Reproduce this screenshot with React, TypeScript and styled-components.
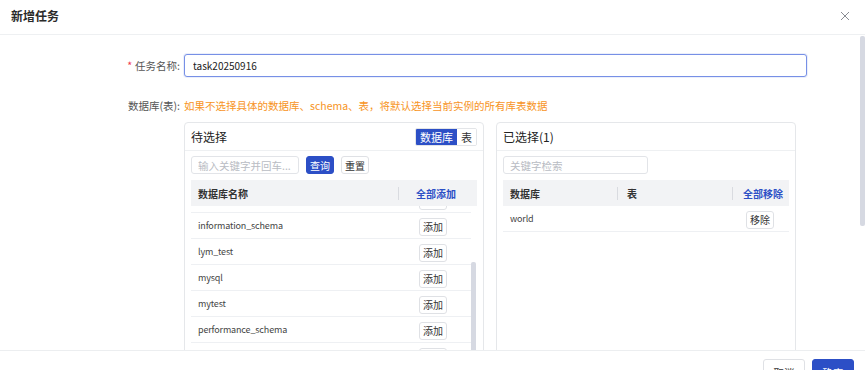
import React, { useLayoutEffect, useRef } from "react";
import styled, { createGlobalStyle } from "styled-components";

const BLUE = "#2c4fc6";

const Global = createGlobalStyle`
  html, body { margin: 0; padding: 0; background: #fff; overflow: hidden; }
  body { font-family: "Noto Sans CJK SC", "Noto Sans", sans-serif; color: #333; }
  * { box-sizing: border-box; }
`;

const Modal = styled.div`
  width: 865px;
  display: flex;
  flex-direction: column;
  background: #fff;
`;

const Header = styled.div`
  height: 35px;
  display: flex;
  align-items: center;
  justify-content: space-between;
  padding: 0 15px 3px 11px;
  border-bottom: 1px solid #eef0f2;
`;

const Title = styled.div`
  font-size: 12px;
  font-weight: 700;
  color: #2a2a2a;
`;

const Close = styled.button`
  border: 0;
  padding: 0;
  background: none;
  display: flex;
  cursor: pointer;
`;

const ScrollArea = styled.div`
  position: relative;
`;

const Thumb = styled.div<{ $top: number; $h: number; $right: number }>`
  position: absolute;
  right: ${(p) => p.$right}px;
  top: ${(p) => p.$top}px;
  width: 5px;
  height: ${(p) => p.$h}px;
  background: #d6d9e2;
  border-radius: 2px;
  pointer-events: none;
`;

const Body = styled.div`
  height: 315px;
  overflow-y: auto;
  padding: 19px 58px 24px 0;
  scrollbar-width: none;
  &::-webkit-scrollbar { display: none; }
`;

const FormRow = styled.div<{ $top?: number; $align?: string }>`
  display: flex;
  align-items: ${(p) => p.$align || "center"};
  margin-top: ${(p) => p.$top || 0}px;
`;

const Label = styled.div`
  width: 184px;
  flex-shrink: 0;
  padding-right: 4px;
  text-align: right;
  font-size: 10.5px;
  line-height: 16px;
  color: #555;
`;

const Star = styled.span`
  color: #f0394d;
  margin-right: 3px;
`;

const Control = styled.div`
  flex: 1;
  min-width: 0;
  display: flex;
  flex-direction: column;
`;

const TextInput = styled.input`
  width: 100%;
  height: 23px;
  border: 1px solid #7790e6;
  border-radius: 3px;
  padding: 0 8px;
  font-family: inherit;
  font-size: 10px;
  color: #222;
  outline: none;
  box-shadow: 0 0 0 1px rgba(90, 120, 220, 0.12);
`;

const Hint = styled.div`
  font-size: 10.5px;
  line-height: 16px;
  color: #f7941e;
`;

const Transfer = styled.div`
  display: flex;
  gap: 12px;
  margin-top: 8px;
`;

const Panel = styled.div`
  width: 300px;
  height: 350px;
  border: 1px solid #e5e7ea;
  border-radius: 4px;
  display: flex;
  flex-direction: column;
  overflow: hidden;
`;

const PanelHead = styled.div`
  height: 28px;
  flex-shrink: 0;
  padding: 0 6px;
  display: flex;
  align-items: center;
  justify-content: space-between;
  border-bottom: 1px solid #eef0f2;
  font-size: 12px;
  color: #222;
`;

const Toggle = styled.div`
  display: flex;
  height: 18px;
  border: 1px solid #e3e5e8;
  border-radius: 2px;
  overflow: hidden;
`;

const ToggleItem = styled.div<{ $active?: boolean }>`
  padding: 0 4px;
  display: flex;
  align-items: center;
  font-size: 11px;
  background: ${(p) => (p.$active ? BLUE : "#fff")};
  color: ${(p) => (p.$active ? "#fff" : "#333")};
`;

const Toolbar = styled.div`
  display: flex;
  align-items: center;
  gap: 7px;
  padding: 5px 6px 0;
  flex-shrink: 0;
`;

const Search = styled.input<{ $w: number }>`
  width: ${(p) => p.$w}px;
  height: 18px;
  border: 1px solid #e2e4e8;
  border-radius: 3px;
  padding: 0 6px;
  font-family: inherit;
  font-size: 10.5px;
  outline: none;
  &::placeholder { color: #b9bcc3; }
`;

const Btn = styled.button<{ $primary?: boolean; $w?: number; $h?: number }>`
  width: ${(p) => p.$w || 28}px;
  height: ${(p) => p.$h || 18}px;
  padding: 0;
  border-radius: 3px;
  font-family: inherit;
  font-size: 10px;
  cursor: pointer;
  border: 1px solid ${(p) => (p.$primary ? BLUE : "#dfe1e5")};
  background: ${(p) => (p.$primary ? BLUE : "#fff")};
  color: ${(p) => (p.$primary ? "#fff" : "#333")};
  flex-shrink: 0;
`;

const Table = styled.div`
  flex: 1;
  min-height: 0;
  margin: 6px 6px 0;
  display: flex;
  flex-direction: column;
`;

const THead = styled.div<{ $cols: string }>`
  height: 26px;
  flex-shrink: 0;
  display: grid;
  grid-template-columns: ${(p) => p.$cols};
  align-items: center;
  background: #f2f3f5;
  font-size: 10px;
  font-weight: 600;
  color: #333;
`;

const HeadCell = styled.div<{ $divider?: boolean; $pad: number; $link?: boolean }>`
  height: 13px;
  display: flex;
  align-items: center;
  padding-left: ${(p) => p.$pad}px;
  border-left: ${(p) => (p.$divider ? "1px solid #d9dbe0" : "0")};
  color: ${(p) => (p.$link ? BLUE : "#333")};
`;

const ListArea = styled(ScrollArea)`
  flex: 1;
  min-height: 0;
  display: flex;
  flex-direction: column;
`;

const List = styled.div<{ $gutter?: number }>`
  flex: 1;
  min-height: 0;
  overflow-y: auto;
  padding-right: ${(p) => p.$gutter || 0}px;
  scrollbar-width: none;
  &::-webkit-scrollbar { display: none; }
`;

const Row = styled.div<{ $cols: string }>`
  height: 26px;
  display: grid;
  grid-template-columns: ${(p) => p.$cols};
  align-items: center;
  border-bottom: 1px solid #eef0f3;
  font-size: 9px;
  letter-spacing: -0.15px;
  color: #444;
`;

const Cell = styled.div<{ $pad: number }>`
  padding-left: ${(p) => p.$pad}px;
  display: flex;
  align-items: center;
  white-space: nowrap;
`;

const RowBtn = styled(Btn)`
  letter-spacing: 0;
  margin-top: 2px;
`;

const Footer = styled.div`
  border-top: 1px solid #eceef0;
  padding: 8px 11px;
  display: flex;
  justify-content: flex-end;
  gap: 7px;
`;

const FooterBtn = styled(Btn)`
  font-size: 10.5px;
`;

const dbs = [
  "bank_db",
  "demo",
  "hive_meta",
  "information_schema",
  "lym_test",
  "mysql",
  "mytest",
  "performance_schema",
  "sys",
  "test",
  "test_db",
  "world",
  "zdb",
];

const LEFT_COLS = "207px 1fr";
const RIGHT_COLS = "114px 115px 1fr";

export default function App() {
  const listRef = useRef<HTMLDivElement>(null);
  useLayoutEffect(() => {
    if (listRef.current) listRef.current.scrollTop = 71;
  }, []);

  return (
    <>
      <Global />
      <Modal>
        <Header>
          <Title>新增任务</Title>
          <Close aria-label="关闭">
            <svg width="10" height="10" viewBox="0 0 10 10">
              <path d="M1 1L9 9M9 1L1 9" stroke="#8a8d93" strokeWidth="1" fill="none" />
            </svg>
          </Close>
        </Header>
        <ScrollArea>
          <Body>
            <FormRow>
              <Label>
                <Star>*</Star>任务名称:
              </Label>
              <Control>
                <TextInput defaultValue="task20250916" />
              </Control>
            </FormRow>
            <FormRow $top={21} $align="flex-start">
              <Label>数据库(表):</Label>
              <Control>
                <Hint>如果不选择具体的数据库、schema、表，将默认选择当前实例的所有库表数据</Hint>
                <Transfer>
                  <Panel>
                    <PanelHead>
                      <span>待选择</span>
                      <Toggle>
                        <ToggleItem $active>数据库</ToggleItem>
                        <ToggleItem>表</ToggleItem>
                      </Toggle>
                    </PanelHead>
                    <Toolbar>
                      <Search $w={108} placeholder="输入关键字并回车..." />
                      <Btn $primary>查询</Btn>
                      <Btn>重置</Btn>
                    </Toolbar>
                    <Table>
                      <THead $cols={LEFT_COLS}>
                        <HeadCell $pad={7}>数据库名称</HeadCell>
                        <HeadCell $pad={17} $divider $link>
                          全部添加
                        </HeadCell>
                      </THead>
                      <ListArea>
                        <List ref={listRef} $gutter={6}>
                          {dbs.map((d) => (
                            <Row key={d} $cols={LEFT_COLS}>
                              <Cell $pad={7}>{d}</Cell>
                              <Cell $pad={21}>
                                <RowBtn>添加</RowBtn>
                              </Cell>
                            </Row>
                          ))}
                        </List>
                        <Thumb $top={56} $h={209} $right={1} />
                      </ListArea>
                    </Table>
                  </Panel>
                  <Panel>
                    <PanelHead>
                      <span>已选择(1)</span>
                    </PanelHead>
                    <Toolbar>
                      <Search $w={145} placeholder="关键字检索" />
                    </Toolbar>
                    <Table>
                      <THead $cols={RIGHT_COLS}>
                        <HeadCell $pad={7}>数据库</HeadCell>
                        <HeadCell $pad={9} $divider>
                          表
                        </HeadCell>
                        <HeadCell $pad={10} $divider $link>
                          全部移除
                        </HeadCell>
                      </THead>
                      <ListArea>
                        <List>
                          <Row $cols={RIGHT_COLS}>
                            <Cell $pad={7}>world</Cell>
                            <Cell $pad={9}></Cell>
                            <Cell $pad={14}>
                              <RowBtn>移除</RowBtn>
                            </Cell>
                          </Row>
                        </List>
                      </ListArea>
                    </Table>
                  </Panel>
                </Transfer>
              </Control>
            </FormRow>
          </Body>
          <Thumb $top={1} $h={190} $right={0} />
        </ScrollArea>
        <Footer>
          <FooterBtn $w={42} $h={26}>取消</FooterBtn>
          <FooterBtn $w={42} $h={26} $primary>确定</FooterBtn>
        </Footer>
      </Modal>
    </>
  );
}
